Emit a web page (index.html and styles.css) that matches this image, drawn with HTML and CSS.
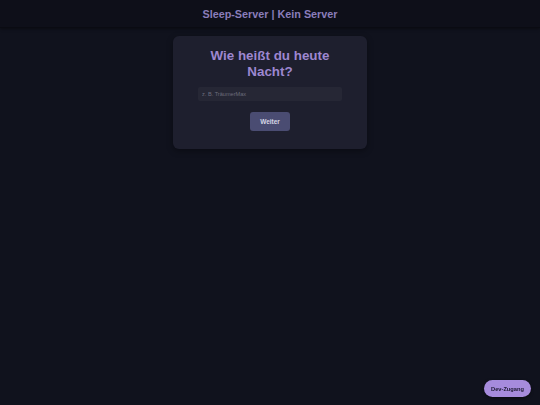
FILE: index.html
```html
<!DOCTYPE html>
<html lang="de">
<head>
<meta charset="utf-8">
<title>Sleep-Server</title>
<link rel="stylesheet" href="styles.css">
</head>
<body>
<header class="topbar">
  <h1 class="brand">Sleep-Server | Kein Server</h1>
</header>
<main class="main">
  <section class="card">
    <h2 class="question">Wie heißt du heute Nacht?</h2>
    <input class="name-input" type="text" placeholder="z. B. TräumerMax">
    <button class="next-btn" type="button">Weiter</button>
  </section>
</main>
<button class="dev-btn" type="button">Dev-Zugang</button>
</body>
</html>
```
FILE: styles.css
```css
* { box-sizing: border-box; }
html, body { margin: 0; padding: 0; }
body {
  background: #10121d;
  font-family: "Liberation Sans", Arial, sans-serif;
  min-height: 405px;
}
.topbar {
  height: 28px;
  background: #0e0f19;
  border-bottom: 1px solid #0a0b12;
  box-shadow: 0 1px 3px rgba(0,0,0,0.4);
  display: flex;
  align-items: center;
  justify-content: center;
}
.brand {
  margin: 0;
  font-size: 10.8px;
  font-weight: bold;
  color: #8a7dba;
}
.main {
  display: flex;
  justify-content: center;
  padding-top: 8px;
}
.card {
  width: 194px;
  background: #1e1f2e;
  border-radius: 6px;
  box-shadow: 0 2px 6px rgba(0,0,0,0.35);
  padding: 12px 25px 18px;
  display: flex;
  flex-direction: column;
  align-items: center;
}
.question {
  margin: 0;
  font-size: 13.4px;
  line-height: 15.5px;
  font-weight: bold;
  color: #9d87d0;
  text-align: center;
}
.name-input {
  margin-top: 8px;
  width: 144px;
  height: 14px;
  border: none;
  border-radius: 2px;
  background: #262735;
  color: #ccc;
  font-family: "Liberation Sans", Arial, sans-serif;
  font-size: 5.6px;
  padding: 0 4px;
  outline: none;
}
.name-input::placeholder { color: #6c6d7c; }
.next-btn {
  margin-top: 11px;
  width: 40px;
  height: 19px;
  border: none;
  border-radius: 3px;
  background: #4a4c72;
  color: #d6d6e6;
  font-family: "Liberation Sans", Arial, sans-serif;
  font-size: 6.5px;
  font-weight: bold;
  padding: 0;
}
.dev-btn {
  position: fixed;
  right: 9px;
  bottom: 8px;
  width: 47px;
  height: 17px;
  border: none;
  border-radius: 9px;
  background: #a68bdc;
  color: #1c1830;
  font-family: "Liberation Sans", Arial, sans-serif;
  font-size: 5.7px;
  font-weight: bold;
  padding: 0;
  box-shadow: 0 1px 3px rgba(0,0,0,0.5);
}
```
